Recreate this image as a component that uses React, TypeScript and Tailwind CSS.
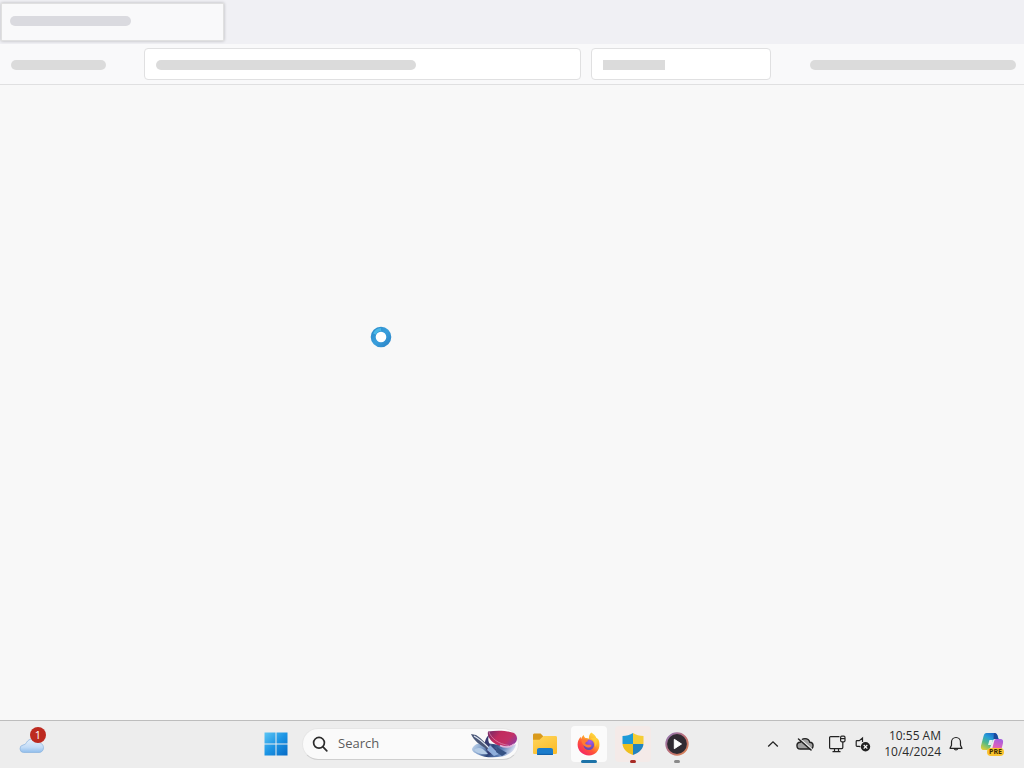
import type { ReactNode } from 'react'

type AppButtonProps = {
  label: string
  children: ReactNode
  className?: string
  indicator?: string
}

function Placeholder({ className }: { className: string }) {
  return <span aria-hidden="true" className={`block h-2.5 ${className}`} />
}

function TabStrip() {
  return (
    <div className="h-11 bg-[#f0f0f4] px-px pt-[3px]">
      <div className="flex h-[38px] w-[223px] border border-[#e0e0e0] bg-[#f9f9fa] px-2 pt-3 shadow-[0_0_3px_rgba(0,0,0,0.25)]">
        <Placeholder className="w-[121px] rounded-full bg-[#dadadf]" />
      </div>
    </div>
  )
}

function Toolbar() {
  return (
    <div className="flex h-[41px] items-center border-b border-[#e0e0e1] bg-[#f9f9fa] pr-2 pl-[11px]">
      <Placeholder className="mt-px w-[95px] rounded-full bg-[#dbdbdb]" />
      <div className="ml-[38px] flex h-8 flex-1 items-center rounded border border-[#e0e0e1] bg-white px-[11px]">
        <Placeholder className="mt-px w-[260px] rounded-full bg-[#dbdbdb]" />
      </div>
      <div className="ml-2.5 flex h-8 w-[180px] items-center rounded border border-[#e0e0e1] bg-white px-[11px]">
        <Placeholder className="mt-px w-[62px] bg-[#dbdbdb]" />
      </div>
      <Placeholder className="mt-px ml-[39px] w-[206px] rounded-full bg-[#dbdbdb]" />
    </div>
  )
}

function BusyRing() {
  return (
    <svg viewBox="0 0 22 22" className="size-[22px]" role="img" aria-label="Loading">
      <defs>
        <linearGradient id="ring" x1="0" y1="0" x2="1" y2="1">
          <stop offset="0" stopColor="#2c8ccb" />
          <stop offset="0.5" stopColor="#3a9fdc" />
          <stop offset="1" stopColor="#2d86c8" />
        </linearGradient>
      </defs>
      <circle cx="11" cy="11" r="7.8" fill="#fff" stroke="url(#ring)" strokeWidth="5" />
      <path d="M4.500 8A7.400 7.400 0 0 1 11 3.400" fill="none" stroke="#4ab8e6" strokeWidth="3" />
    </svg>
  )
}

function WeatherIcon() {
  return (
    <svg viewBox="0 0 30 26" className="h-[26px] w-[30px]">
      <defs>
        <linearGradient id="cloud" x1="0" y1="0" x2="0" y2="1">
          <stop offset="0" stopColor="#e4effa" />
          <stop offset="0.6" stopColor="#c3dcf7" />
          <stop offset="1" stopColor="#8fbdec" />
        </linearGradient>
      </defs>
      <path
        d="M5.500 21.500a3.800 3.800 0 0 1-.5-7.500c1.500-.4 2.500-.5 3.500-2.500C11 7 17 7 19 11.500c3.500-.5 6.500 2 6.500 5.200 0 2.800-2 4.800-4.500 4.800z"
        fill="url(#cloud)"
        stroke="#8fb6df"
        strokeWidth="0.800"
      />
    </svg>
  )
}

function WindowsIcon() {
  return (
    <svg viewBox="0 0 24 24" className="size-6">
      <defs>
        <linearGradient id="win" x1="0" y1="0" x2="24" y2="24" gradientUnits="userSpaceOnUse">
          <stop offset="0" stopColor="#5fc8f5" />
          <stop offset="0.5" stopColor="#1c94e4" />
          <stop offset="1" stopColor="#0669c4" />
        </linearGradient>
      </defs>
      <path d="M.5.500h11v11H.5zM12.500.500h11v11h-11zM.5 12.500h11v11H.5zM12.500 12.500h11v11h-11z" fill="url(#win)" />
    </svg>
  )
}

function SearchIcon() {
  return (
    <svg viewBox="0 0 16 16" className="size-4 shrink-0" fill="none" stroke="#2b2b2b" strokeWidth="1.700">
      <circle cx="7" cy="6.800" r="5.400" />
      <path d="M11 10.900l3.800 3.900" strokeLinecap="round" />
    </svg>
  )
}

function SearchArt() {
  return (
    <svg viewBox="0 0 48 28" className="h-7 w-12 shrink-0">
      <defs>
        <linearGradient id="petal" x1="0" y1="0.2" x2="1" y2="0.7">
          <stop offset="0" stopColor="#7c2a66" />
          <stop offset="0.35" stopColor="#c22b5e" />
          <stop offset="0.7" stopColor="#c23066" />
          <stop offset="1" stopColor="#8f3ba0" />
        </linearGradient>
        <linearGradient id="wing" x1="0" y1="0" x2="1" y2="0.2">
          <stop offset="0" stopColor="#c9dcef" />
          <stop offset="0.3" stopColor="#7d9cc9" />
          <stop offset="0.5" stopColor="#2c4478" />
          <stop offset="0.75" stopColor="#5f82b8" />
          <stop offset="1" stopColor="#d5dcf0" />
        </linearGradient>
      </defs>
      <path d="M2 19c2-5 8-7 14-6l14 2c6 2 12 2 16-1-1 7-7 11-14 12.500-9 1.500-18 1-24-2-3-1.500-6-3-6-5.500z" fill="url(#wing)" />
      <path d="M20 4c-3 4-2 9 2 13l5 3-8 5-4-8c-1-5 1-10 5-13z" fill="#353a70" />
      <path d="M1 4l5 1c6 4 10 8 15 15l-4-1C10 15 4 11 1 4z" fill="#4b5878" />
      <path d="M4 6c6 3 10 7 16 13" fill="none" stroke="#e2e9f3" strokeWidth="1.200" />
      <path d="M4 20c4-3 8-3 14 4-5 1-11 0-14-4z" fill="#b5cce6" />
      <path d="M20 15l9 9-5 2-7-6z" fill="#8eaedb" />
      <path d="M27 17l10 6-5 3-6-4z" fill="#365385" />
      <path d="M18 1.500c9-1.500 20-1 26 1.500 4 3 4 8 0 11-6 4-15 3-20-1-4-3-7-7-6-11.500z" fill="url(#petal)" />
      <path d="M19 2c2 6 9 12 20 13.500" fill="none" stroke="#e08bb0" strokeWidth="0.700" />
      <path d="M30 15.500c5 2.500 11 2 14-1.500" fill="none" stroke="#e2b4da" strokeWidth="1.400" />
    </svg>
  )
}

function FolderIcon() {
  return (
    <svg viewBox="0 0 26 24" className="h-6 w-[26px]">
      <defs>
        <linearGradient id="folder" x1="0" y1="0" x2="0.6" y2="1">
          <stop offset="0" stopColor="#ffd65c" />
          <stop offset="1" stopColor="#fbbd2c" />
        </linearGradient>
      </defs>
      <path d="M1 3c0-1 .7-1.500 1.600-1.500h6L11 4v4H1z" fill="#d99a1c" />
      <path d="M1 7.800h6.500L11.500 4h12c1 0 1.500.6 1.500 1.500v15c0 1-.7 1.500-1.500 1.500h-21C1.500 22 1 21.500 1 20.500z" fill="url(#folder)" />
      <path d="M5 23v-4.700c0-1.500.8-2.300 2.200-2.300h11.600c1.400 0 2.200.8 2.200 2.300V23z" fill="#1b7ccb" />
      <path d="M5.500 22.400h15" stroke="#1262ab" strokeWidth="1.200" />
    </svg>
  )
}

function FirefoxIcon() {
  return (
    <svg viewBox="0 0 24 24" className="size-6">
      <defs>
        <linearGradient id="fox" x1="0.85" y1="0.05" x2="0.2" y2="0.95">
          <stop offset="0" stopColor="#ffe243" />
          <stop offset="0.35" stopColor="#ffae2b" />
          <stop offset="0.65" stopColor="#ff5438" />
          <stop offset="1" stopColor="#f52368" />
        </linearGradient>
        <radialGradient id="globe" cx="0.6" cy="0.2" r="0.9">
          <stop offset="0" stopColor="#ab5be8" />
          <stop offset="1" stopColor="#5145ad" />
        </radialGradient>
      </defs>
      <path
        d="M14.200.5c2.600 1.400 4.600 3.600 5.200 5.500 1 .4 1.800 1 2.300 2C24.300 15.800 20 23.500 12 23.500 5.500 23.500.6 18.700.6 12.600c0-3.200 1.300-5.900 3-7.900l.5 2.200c.5-1.600 1.500-3 2.700-3.900.1 1.400.7 2.400 1.700 3.100 1.400-.2 2.500.1 3.400.6-.1-2.500.6-4.700 2.300-6.200z"
        fill="url(#fox)"
      />
      <circle cx="11.800" cy="12.800" r="5.300" fill="url(#globe)" />
      <path d="M4.500 8.300c2.400-1.500 4.800-1.300 6.800.4-1 .6-2.200 1.100-2.900 2.100-.5 1.300 1 2.100 3.200 1.900 1.700-.2 2.700.3 2.900 1-1.100 2-4.200 2.300-6.200.8C6 13.800 4.800 11.300 4.500 8.300z" fill="#ff7a33" />
      <path d="M13.500 6.500c3.500 1.500 5.600 4.700 4.600 8.700 1.700-2 2-5 1.300-9.200-1.600-.6-4-.5-5.900.5z" fill="#ffd43b" opacity="0.75" />
    </svg>
  )
}

function ShieldIcon() {
  return (
    <svg viewBox="0 0 24 24" className="size-6">
      <defs>
        <clipPath id="shield">
          <path d="M12 1c3 2 6.500 3 10.500 3v7c0 6-4 9.500-10.500 12C5.500 20.500 1.500 17 1.500 11V4C5.500 4 9 3 12 1z" />
        </clipPath>
      </defs>
      <g clipPath="url(#shield)">
        <path d="M0 0h12v12H0z" fill="#1e9ad8" />
        <path d="M12 0h12v12H12z" fill="#f5cd35" />
        <path d="M0 12h12v12H0z" fill="#efbf1e" />
        <path d="M12 12h12v12H12z" fill="#2384bf" />
      </g>
    </svg>
  )
}

function MediaIcon() {
  return (
    <svg viewBox="0 0 24 24" className="size-6">
      <defs>
        <linearGradient id="media" x1="0" y1="0" x2="1" y2="1">
          <stop offset="0" stopColor="#8d78b8" />
          <stop offset="0.5" stopColor="#bd7078" />
          <stop offset="1" stopColor="#dd8550" />
        </linearGradient>
      </defs>
      <circle cx="12" cy="12" r="10.800" fill="#302b32" stroke="url(#media)" strokeWidth="1.800" />
      <path d="M9.300 7.300v9.400l7.200-4.700z" fill="#fff" stroke="#fff" strokeWidth="1" strokeLinejoin="round" />
    </svg>
  )
}

function ChevronIcon() {
  return (
    <svg viewBox="0 0 12 12" className="size-3" fill="none" stroke="#222" strokeWidth="1.300">
      <path d="M1.200 8.500L6 3.800l4.800 4.700" />
    </svg>
  )
}

function CloudOffIcon() {
  return (
    <svg viewBox="0 0 18 16" className="h-4 w-[18px]" fill="none" stroke="#222" strokeWidth="1.400">
      <path d="M4.500 13a3.400 3.400 0 0 1-.3-6.800 5 5 0 0 1 9.600 0A3.400 3.400 0 0 1 13.500 13z" fill="#a0a0a0" />
      <path d="M4 2.700l12 10.500" stroke="#ededed" strokeWidth="1.200" />
      <path d="M2.500 3l12.500 11" strokeLinecap="round" strokeWidth="1.500" />
    </svg>
  )
}

function MonitorIcon() {
  return (
    <svg viewBox="0 0 18 18" className="size-[18px]" fill="none" stroke="#222" strokeWidth="1.200">
      <path d="M11.500 1.600H2.600a1 1 0 0 0-1 1v10a1 1 0 0 0 1 1h11.200a1 1 0 0 0 1-1V7" />
      <path d="M6.500 13.600v3M10.500 13.600v3M4.500 16.600h8" />
      <rect x="12.600" y="1.200" width="4.400" height="5.600" rx="1.200" />
      <path d="M12.600 3.600H17" />
    </svg>
  )
}

function MutedIcon() {
  return (
    <svg viewBox="0 0 16 16" className="size-4" fill="none" stroke="#222" strokeWidth="1.200">
      <path d="M7.500 6V2L4.300 4.700H2a.8.800 0 0 0-.8.800v4a.8.800 0 0 0 .8.800h2.400l1 .8" />
      <circle cx="10.500" cy="10.800" r="4.700" fill="#222" stroke="none" />
      <path d="M8.700 9l3.600 3.600M12.300 9l-3.600 3.600" stroke="#fff" />
    </svg>
  )
}

function BellIcon() {
  return (
    <svg viewBox="0 0 16 16" className="size-4" fill="none" stroke="#222" strokeWidth="1.200" strokeLinejoin="round">
      <path d="M8 1.500c-2.700 0-4.500 2-4.500 4.600v3.100L2 12.300h12l-1.500-3.100V6.100C12.500 3.500 10.700 1.500 8 1.500z" />
      <path d="M6.200 12.600a1.900 1.900 0 0 0 3.600 0" />
    </svg>
  )
}

function CopilotIcon() {
  return (
    <svg viewBox="0 0 24 24" className="size-6">
      <defs>
        <linearGradient id="copilotBlue" x1="0.8" y1="0" x2="0.2" y2="1">
          <stop offset="0" stopColor="#1c5fc4" />
          <stop offset="0.35" stopColor="#279ed8" />
          <stop offset="0.65" stopColor="#4fb88a" />
          <stop offset="1" stopColor="#d8ce39" />
        </linearGradient>
        <linearGradient id="copilotPink" x1="0.6" y1="0" x2="0.3" y2="1">
          <stop offset="0" stopColor="#a65fdf" />
          <stop offset="0.5" stopColor="#df60ba" />
          <stop offset="1" stopColor="#fb8a50" />
        </linearGradient>
      </defs>
      <path d="M6.500 1h8c2 0 2.800 1.500 3.400 3.500L18.500 7h-3c-2 0-2.700 1-3.300 3l-1.800 5c-.7 2-1.700 3-3.500 3H3.500C1.500 18 .5 16 1 13.700L3.600 4C4.100 2 5 1 6.500 1z" fill="url(#copilotBlue)" />
      <path d="M14 1c2.500 0 3 1.500 3.600 3.500l.9 2.500h-5z" fill="#1c4a9c" />
      <path d="M16.500 7h4c2 0 3 1.500 2.500 4l-2 8c-.5 2-1.600 3-3.200 3H9c1.500-.3 2.200-1.500 2.700-3.200l2.300-9c.5-1.800 1-2.800 2.500-2.800z" fill="url(#copilotPink)" />
      <path d="M9.500 8h3.300l-1.400 5H8z" fill="#e3f3ee" />
    </svg>
  )
}

function AppButton({ label, children, className = '', indicator }: AppButtonProps) {
  return (
    <button type="button" aria-label={label} className="relative flex h-full w-11 items-center justify-center">
      <span className={`flex h-9 w-9 items-center justify-center rounded-sm ${className}`}>{children}</span>
      {indicator && <span className={`absolute bottom-1 h-[3px] rounded-full ${indicator}`} />}
    </button>
  )
}

function TrayButton({ label, children, className }: AppButtonProps) {
  return (
    <button type="button" aria-label={label} className={`flex h-full items-center justify-center ${className}`}>
      {children}
    </button>
  )
}

function Taskbar() {
  return (
    <footer className="flex h-12 items-center border-t border-[#bdbdbd] bg-[#ededed] pb-px text-[#2b2b2b]">
      <div className="flex h-full w-1/4 items-center pl-[18px]">
        <button type="button" aria-label="Weather, 1 alert" className="relative flex">
          <WeatherIcon />
          <span className="absolute -top-1 left-3 flex size-4 items-center justify-center rounded-full bg-[#bd2a20] text-[11px] leading-4 text-white">
            1
          </span>
        </button>
      </div>

      <button type="button" aria-label="Start" className="flex h-full w-10 items-center justify-center">
        <WindowsIcon />
      </button>
      <label className="ml-1.5 flex h-8 w-[217px] items-center rounded-full border border-[#e6e6e6] border-b-[#cfcfcf] bg-[#fafafa] pl-[9px]">
        <SearchIcon />
        <input
          type="text"
          aria-label="Search"
          placeholder="Search"
          className="ml-2.5 min-w-0 flex-1 bg-transparent text-[13px] outline-none placeholder:text-[#5c5c5c]"
        />
        <SearchArt />
      </label>
      <div className="ml-1 flex h-full">
        <AppButton label="File Explorer">
          <FolderIcon />
        </AppButton>
        <AppButton label="Firefox" className="bg-[#fbfbfb]" indicator="w-4 bg-[#1d73a8]">
          <FirefoxIcon />
        </AppButton>
        <AppButton label="Security" className="bg-[#f4eae8]" indicator="w-1.5 bg-[#a82c26]">
          <ShieldIcon />
        </AppButton>
        <AppButton label="Media Player" indicator="w-1.5 bg-[#8a8a8a]">
          <MediaIcon />
        </AppButton>
      </div>

      <div className="ml-auto flex h-full items-center pr-2">
        <TrayButton label="Show hidden icons" className="w-8">
          <ChevronIcon />
        </TrayButton>
        <TrayButton label="OneDrive" className="w-8">
          <CloudOffIcon />
        </TrayButton>
        <TrayButton label="Network" className="w-8">
          <MonitorIcon />
        </TrayButton>
        <TrayButton label="Volume muted" className="w-5">
          <MutedIcon />
        </TrayButton>
        <button type="button" className="w-[68px] text-right text-[12px] leading-4 whitespace-nowrap">
          10:55 AM
          <br />
          10/4/2024
        </button>
        <TrayButton label="Notifications" className="ml-[3px] w-6">
          <BellIcon />
        </TrayButton>
        <button type="button" aria-label="Copilot preview" className="relative flex h-full w-12 items-center justify-center">
          <CopilotIcon />
          <span className="absolute right-3 bottom-[11px] rounded-sm bg-[#f9c22e] px-0.5 text-[7px] leading-2 font-bold text-[#3b2a00]">
            PRE
          </span>
        </button>
      </div>
    </footer>
  )
}

export default function App() {
  return (
    <div className="flex min-h-screen flex-col bg-[#f8f8f8] font-['Open_Sans','Noto_Sans',sans-serif]">
      <header>
        <TabStrip />
        <Toolbar />
      </header>
      <main className="relative flex-1">
        <div className="absolute top-[241px] left-[370px]">
          <BusyRing />
        </div>
      </main>
      <Taskbar />
    </div>
  )
}
